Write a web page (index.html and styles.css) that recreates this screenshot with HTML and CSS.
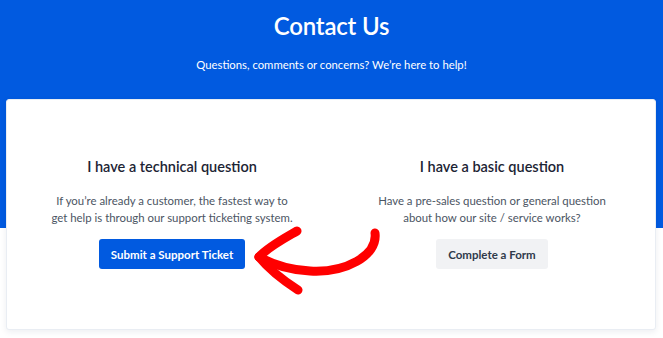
FILE: index.html
```html
<!DOCTYPE html>
<html>
<head>
<meta charset="utf-8">
<link rel="stylesheet" href="styles.css">
</head>
<body>
<div class="page">
  <header class="hero">
    <h1 class="hero-title">Contact Us</h1>
    <p class="hero-sub">Questions, comments or concerns? We’re here to help!</p>
  </header>
  <main class="card">
    <section class="col">
      <h2 class="col-title">I have a technical question</h2>
      <p class="col-text">If you’re already a customer, the fastest way to<br>get help is through our support ticketing system.</p>
      <a class="btn btn-primary" href="#">Submit a Support Ticket</a>
    </section>
    <section class="col">
      <h2 class="col-title">I have a basic question</h2>
      <p class="col-text">Have a pre-sales question or general question<br>about how our site / service works?</p>
      <a class="btn btn-light" href="#">Complete a Form</a>
    </section>
  </main>
  <svg class="arrow" width="663" height="338" viewBox="0 0 663 338" xmlns="http://www.w3.org/2000/svg">
    <g fill="none" stroke="#ff0000" stroke-linecap="round" stroke-linejoin="round">
      <path d="M375 233 C 378 256, 345 273, 310 271 C 290 270, 272 264, 259 257" stroke-width="9"/>
      <path d="M297 231 C 285 238, 268 247, 259 257" stroke-width="9"/>
      <path d="M259 257 C 268 268, 284 281, 298 290" stroke-width="9"/>
    </g>
  </svg>
</div>
</body>
</html>
```

FILE: styles.css
```css
* { box-sizing: border-box; }
html, body { margin: 0; padding: 0; background: #ffffff; }
body {
  font-family: "Lato", "Open Sans", sans-serif;
  width: 663px;
  height: 338px;
  overflow: hidden;
}
.page { position: relative; width: 663px; height: 338px; }
.hero {
  background: #015ae0;
  height: 228px;
  padding-top: 11px;
  text-align: center;
  color: #ffffff;
}
.hero-title {
  margin: 0;
  font-size: 24px;
  font-weight: 600;
  line-height: 30px;
  letter-spacing: -0.2px;
}
.hero-sub {
  margin: 16px 0 0;
  font-size: 11.3px;
  line-height: 16px;
}
.card {
  margin: -129px 7px 0 6px;
  height: 231px;
  background: #ffffff;
  border: 1px solid #e9edf3;
  border-radius: 3px;
  box-shadow: 0 2px 6px rgba(20, 40, 80, 0.08);
  display: grid;
  grid-template-columns: 1fr 1fr;
  padding: 57px 0 0;
}
.col {
  display: flex;
  flex-direction: column;
  align-items: center;
  text-align: center;
}
.col:first-child { padding-left: 6px; }
.col:last-child { padding-right: 2px; }
.col-title {
  margin: 0;
  font-size: 14.5px;
  font-weight: 600;
  line-height: 20px;
  color: #1c2434;
}
.col-text {
  margin: 15px 0 0;
  font-size: 11.4px;
  line-height: 17px;
  color: #4b5563;
}
.btn {
  margin-top: 13px;
  display: inline-flex;
  align-items: center;
  justify-content: center;
  height: 30px;
  border-radius: 3px;
  font-size: 11.5px;
  font-weight: 700;
  text-decoration: none;
}
.btn-primary {
  width: 146px;
  background: #015ae0;
  color: #ffffff;
}
.btn-light {
  width: 112px;
  background: #f1f2f4;
  color: #2f3a4b;
}
.arrow {
  position: absolute;
  left: 0;
  top: 0;
  pointer-events: none;
}
```
